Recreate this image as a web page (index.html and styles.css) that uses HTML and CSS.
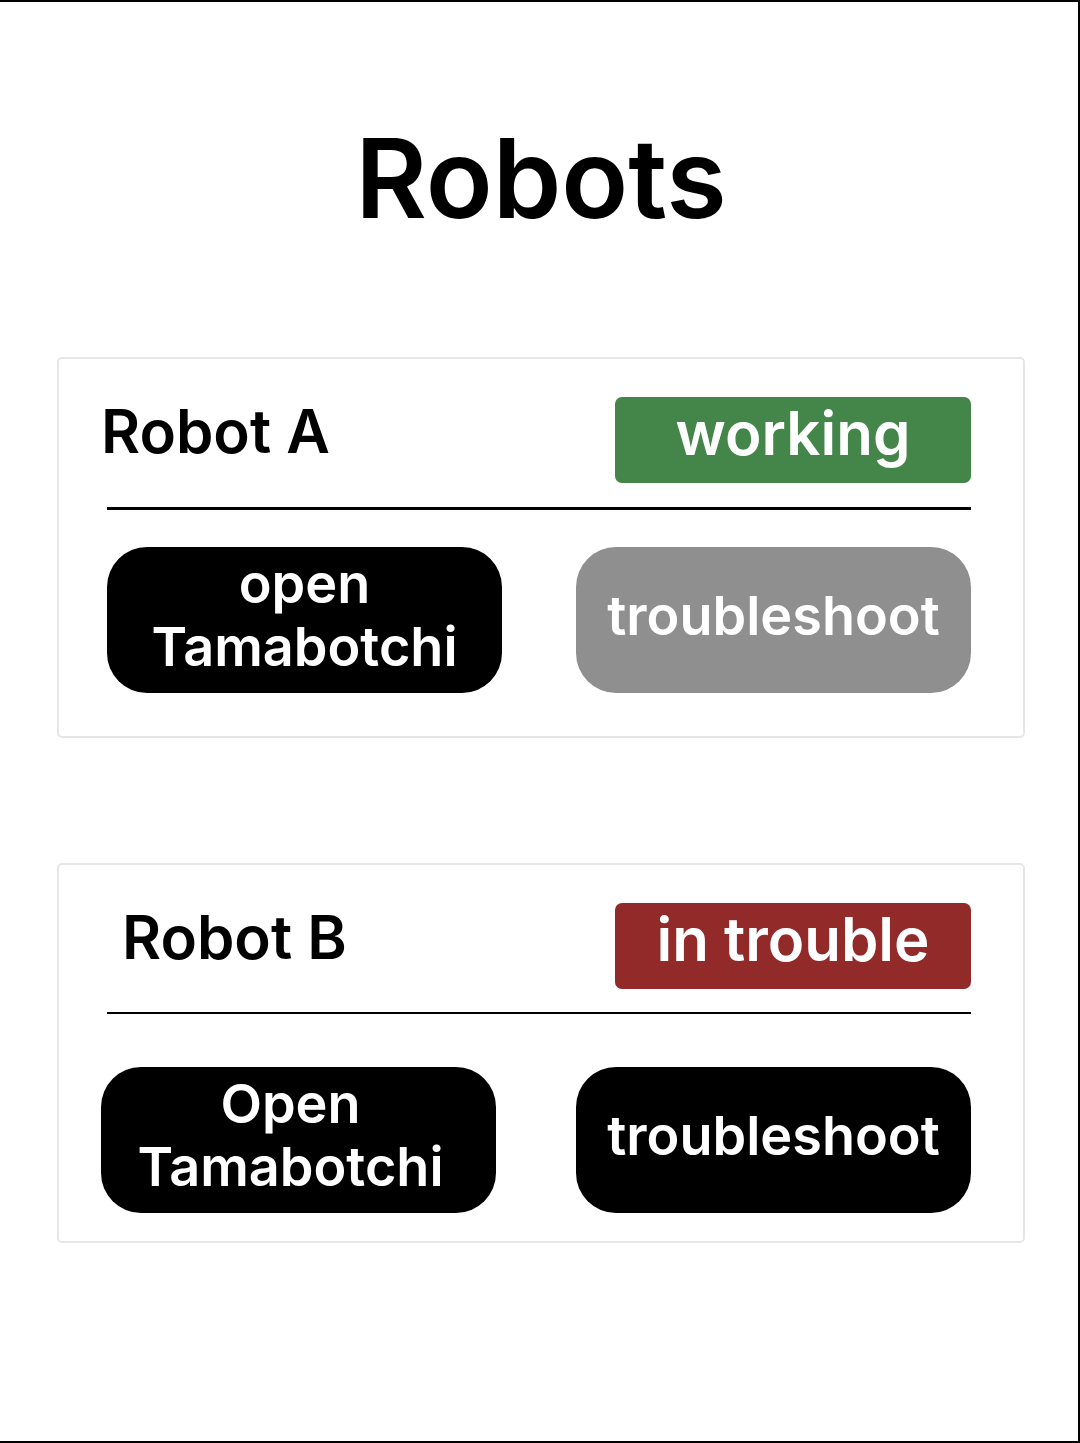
FILE: index.html
```html
<!DOCTYPE html>
<html lang="en">
<head>
<meta charset="utf-8">
<title>Robots</title>
<link rel="stylesheet" href="styles.css">
</head>
<body>
<div class="page">
  <h1 class="title">Robots</h1>

  <section class="card card-a">
    <div class="card-head">
      <div class="name">Robot A</div>
      <div class="badge badge-ok">working</div>
    </div>
    <div class="divider"></div>
    <div class="actions">
      <button class="btn btn-dark">open<br>Tamabotchi</button>
      <button class="btn btn-muted">troubleshoot</button>
    </div>
  </section>

  <section class="card card-b">
    <div class="card-head">
      <div class="name">Robot B</div>
      <div class="badge badge-bad">in trouble</div>
    </div>
    <div class="divider"></div>
    <div class="actions">
      <button class="btn btn-dark">Open<br>Tamabotchi</button>
      <button class="btn btn-dark">troubleshoot</button>
    </div>
  </section>
</div>
</body>
</html>
```

FILE: styles.css
```css
* { box-sizing: border-box; }

html, body {
  margin: 0;
  padding: 0;
  background: #ffffff;
}

body {
  font-family: Inter, "Noto Sans", "Liberation Sans", sans-serif;
  color: #000;
}

.page {
  width: 1080px;
  height: 1443px;
  border-top: 2px solid #000;
  border-right: 2px solid #000;
  border-bottom: 2px solid #000;
  padding-top: 111px;
  display: flex;
  flex-direction: column;
}

.title {
  margin: 0;
  font-size: 110px;
  line-height: 130px;
  font-weight: 600;
  text-align: center;
  padding-left: 4px;
}

.card {
  width: 968px;
  margin-left: 57px;
  border: 2px solid #e6e6e6;
  border-radius: 5px;
  padding: 36px 52px 43px 48px;
  display: flex;
  flex-direction: column;
}

.card-a { margin-top: 114px; }
.card-b { margin-top: 125px; padding-bottom: 28px; }

.card-head {
  display: flex;
  justify-content: space-between;
  align-items: flex-start;
}

.name {
  font-size: 60px;
  font-weight: 600;
  line-height: 72px;
}

.card-a .name { margin-left: -6px; }
.card-b .name { margin-left: 15px; }

.badge {
  width: 356px;
  height: 86px;
  margin-top: 2px;
  border-radius: 7px;
  color: #fff;
  font-size: 60px;
  font-weight: 600;
  display: flex;
  align-items: center;
  justify-content: center;
  padding-bottom: 14px;
}

.badge-ok { background: #44864a; }
.badge-bad { background: #922a2a; }

.divider {
  height: 3px;
  background: #000;
  margin-top: 24px;
}

.card-b .divider { height: 2px; margin-top: 23px; }

.actions {
  display: flex;
  justify-content: space-between;
  margin-top: 37px;
}

.card-b .actions { margin-top: 53px; }

.btn {
  width: 395px;
  height: 146px;
  border: none;
  border-radius: 40px;
  color: #fff;
  font-family: inherit;
  font-size: 54px;
  font-weight: 600;
  line-height: 63px;
  text-align: center;
  padding: 0 10px 10px;
  display: flex;
  align-items: center;
  justify-content: center;
}

.btn-dark { background: #000; }
.btn-muted { background: #8f8f8f; }

.card-b .btn:first-child {
  margin-left: -6px;
  padding-right: 26px;
}
```
